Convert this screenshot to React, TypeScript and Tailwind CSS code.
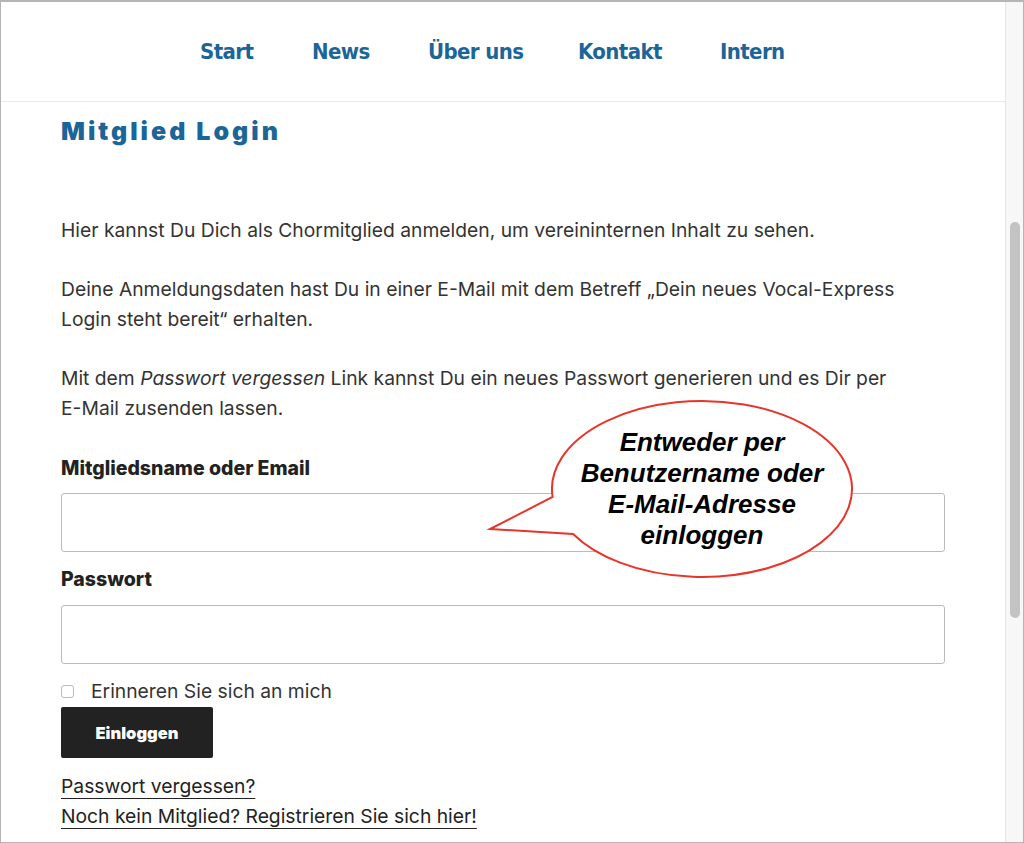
import React from "react";

const body = { fontFamily: "Inter, 'Noto Sans', sans-serif" };

export default function App() {
  return (
    <div className="relative w-[1024px] h-[843px] bg-white border border-[#b5b5b5] border-t-2 flex overflow-hidden" style={body}>
      <div className="flex-1 flex flex-col min-w-0">
        <header className="h-[100px] shrink-0 border-b border-[#eaeaea] flex items-center pl-[199px]">
          <nav className="flex items-center text-[22px] font-bold text-[#1b6599] tracking-[-0.6px]" style={{ fontFamily: "'DejaVu Sans Condensed', 'Liberation Sans Narrow', sans-serif" }}>
            <a className="w-[112px]">Start</a>
            <a className="w-[116px]">News</a>
            <a className="w-[150px]">Über uns</a>
            <a className="w-[142px]">Kontakt</a>
            <a>Intern</a>
          </nav>
        </header>
        <main className="px-[60px] pt-[13px] text-[#333] text-[19.3px] leading-[30px]">
          <h1 className="text-[25px] leading-[32px] font-black text-[#1b6599] tracking-[3px]">
            Mitglied Login
          </h1>
          <p className="mt-[68px]">Hier kannst Du Dich als Chormitglied anmelden, um vereininternen Inhalt zu sehen.</p>
          <p className="mt-[29px]">
            Deine Anmeldungsdaten hast Du in einer E-Mail mit dem Betreff „Dein neues Vocal-Express
            <br />
            Login steht bereit“ erhalten.
          </p>
          <p className="mt-[29px]">
            Mit dem <em>Passwort vergessen</em> Link kannst Du ein neues Passwort generieren und es Dir per
            <br />
            E-Mail zusenden lassen.
          </p>
          <label className="block mt-[30px] font-extrabold text-[#222] text-[19.5px]">Mitgliedsname oder Email</label>
          <input type="text" className="block mt-[10px] w-full h-[59px] border border-[#bbb] rounded-[3px] bg-white" />
          <label className="block mt-[12px] font-extrabold text-[#222] text-[19.5px]">Passwort</label>
          <input type="password" className="block mt-[11px] w-full h-[59px] border border-[#bbb] rounded-[3px] bg-white" />
          <div className="mt-[12px] flex items-center h-[30px]">
            <span className="w-[13px] h-[13px] border border-[#bbb] rounded-[3px] bg-white" />
            <span className="ml-[17px] text-[#333]">Erinneren Sie sich an mich</span>
          </div>
          <button className="block mt-px w-[152px] h-[51px] bg-[#222] rounded-[2px] text-white text-[16.5px] font-black">
            Einloggen
          </button>
          <div className="mt-[13px] text-[#222]">
            <a className="underline underline-offset-[5px] decoration-1">Passwort vergessen?</a>
          </div>
          <div className="text-[#222]">
            <a className="underline underline-offset-[5px] decoration-1">Noch kein Mitglied? Registrieren Sie sich hier!</a>
          </div>
        </main>
      </div>
      <div className="w-[18px] shrink-0 bg-[#f7f7f7] border-l border-[#e6e6e6] flex justify-center pt-[220px]">
        <div className="w-[10px] h-[396px] rounded-full bg-[#c3c3c3]" />
      </div>

      <div className="absolute left-[479px] top-[393px] w-[380px] h-[190px]">
        <svg width="380" height="190" viewBox="0 0 380 190" className="absolute inset-0">
          <path d="M 72.6 102 A 150 88 0 1 1 93.1 139 L 10 134 Z" fill="white" stroke="#e8352b" strokeWidth="2" strokeLinejoin="miter" />
        </svg>
        <div
          className="absolute left-[72px] top-[6px] w-[300px] h-[176px] flex flex-col items-center justify-center text-black text-[26px] leading-[31px] font-bold italic text-center"
          style={{ fontFamily: "'Liberation Sans', Arial, sans-serif" }}
        >
          <span>Entweder per</span>
          <span>Benutzername oder</span>
          <span>E-Mail-Adresse</span>
          <span>einloggen</span>
        </div>
      </div>
    </div>
  );
}
